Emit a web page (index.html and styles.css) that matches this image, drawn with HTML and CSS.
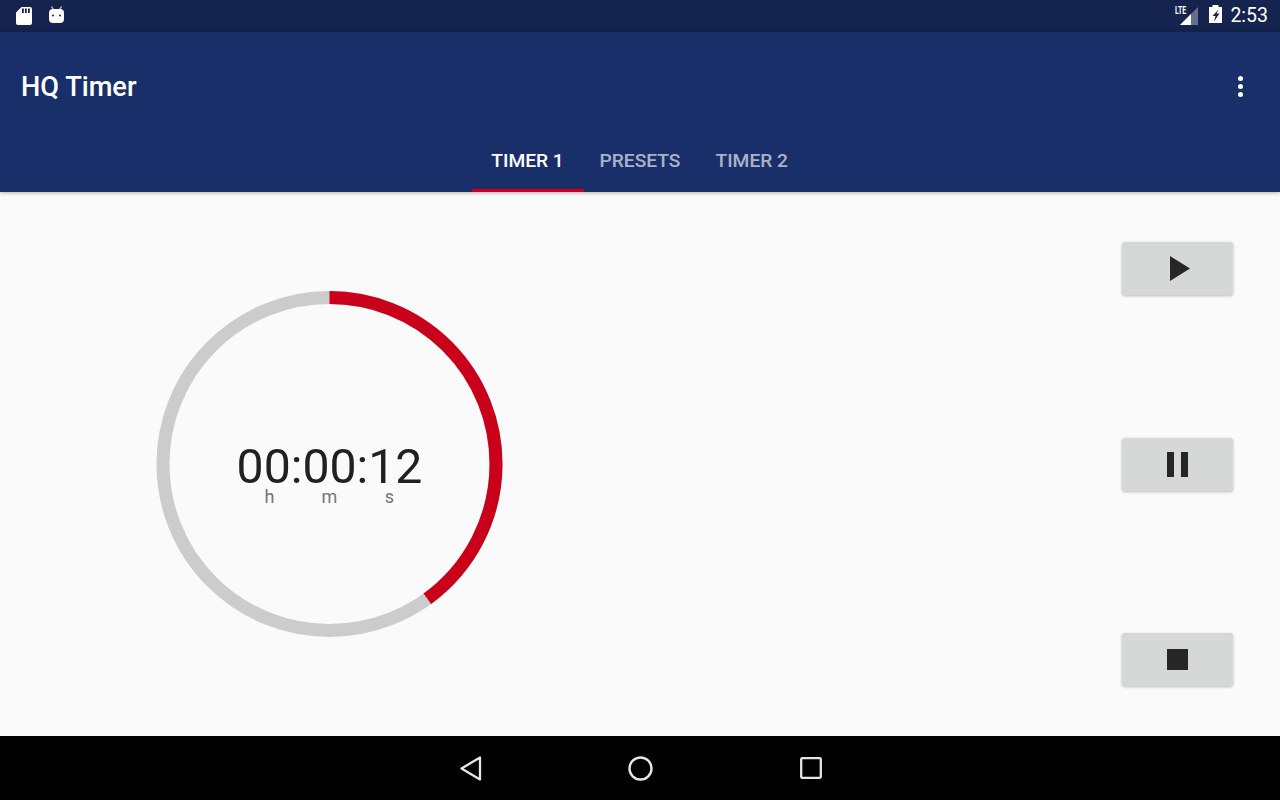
FILE: index.html
```html
<!DOCTYPE html>
<html lang="en">
<head>
<meta charset="utf-8">
<title>HQ Timer</title>
<link rel="stylesheet" href="styles.css">
</head>
<body>
<div class="screen">
  <header class="status-bar">
    <div class="status-left">
      <svg class="icon-sd" viewBox="0 0 16 18"><path fill="#fff" fill-rule="evenodd" d="M5.500 0H14a2 2 0 0 1 2 2V16a2 2 0 0 1-2 2H2a2 2 0 0 1-2-2V5.500ZM6 1.500V6H7.800V1.500ZM9 1.500V6H10.800V1.500ZM12 1.500V6H13.800V1.500Z"/></svg>
      <svg class="icon-android" viewBox="0 0 15 17"><path fill="#fff" fill-opacity=".75" d="M2.800 0l2.200 3.200-1 .6L1.900.7ZM12.200 0l.9.7-2.100 3.100-1-.6Z"/><path fill="#fff" fill-rule="evenodd" d="M4 3H11a4 4 0 0 1 4 4V13a4 4 0 0 1-4 4H4a4 4 0 0 1-4-4V7a4 4 0 0 1 4-4ZM4 8.500a1 1 0 1 0 0 2 1 1 0 0 0 0-2ZM11 8.500a1 1 0 1 0 0 2 1 1 0 0 0 0-2Z"/></svg>
    </div>
    <div class="status-right">
      <div class="signal">
        <span class="lte">LTE</span>
        <svg class="icon-signal" viewBox="0 0 18 18"><path fill="#fff" fill-opacity=".35" d="M18 0V18H0Z"/><path fill="#fff" d="M11 7V18H0Z"/></svg>
      </div>
      <svg class="icon-battery" viewBox="0 0 13 18"><path fill="#fff" fill-rule="evenodd" d="M3.500 0H9.500V2H13V18H0V2H3.500ZM10 4 3.500 11H6.500L5 16.500 10.500 8.500H7.500Z"/></svg>
      <span class="clock">2:53</span>
    </div>
  </header>

  <div class="app-bar">
    <div class="title-row">
      <h1 class="title">HQ Timer</h1>
      <div class="overflow"><i></i><i></i><i></i></div>
    </div>
    <nav class="tabs">
      <div class="tab tab-active">TIMER 1</div>
      <div class="tab tab-presets">PRESETS</div>
      <div class="tab">TIMER 2</div>
    </nav>
  </div>

  <main class="content">
    <section class="dial">
      <svg class="ring" viewBox="0 0 347 347">
        <circle class="ring-track" cx="173.500" cy="173" r="166.500"/>
        <circle class="ring-progress" cx="173.500" cy="173" r="166.500" pathLength="100" stroke-dasharray="40 60" transform="rotate(-90 173.500 173)"/>
      </svg>
      <div class="readout">
        <div class="digits">00:00:12</div>
        <div class="units"><span>h</span><span>m</span><span>s</span></div>
      </div>
    </section>
    <section class="controls">
      <button class="control" type="button" aria-label="Start"><svg viewBox="0 0 20 25" class="glyph-play"><path fill="#262626" d="M0 0 20 12.500 0 25Z"/></svg></button>
      <button class="control" type="button" aria-label="Pause"><svg viewBox="0 0 21 25" class="glyph-pause"><path fill="#262626" d="M0 0H7V25H0ZM14 0H21V25H14Z"/></svg></button>
      <button class="control" type="button" aria-label="Stop"><svg viewBox="0 0 21 21" class="glyph-stop"><path fill="#262626" d="M0 0H21V21H0Z"/></svg></button>
    </section>
  </main>

  <footer class="nav-bar">
    <svg class="nav-back" viewBox="0 0 22 25"><path fill="none" stroke="#e6e6e6" stroke-width="2.300" stroke-linejoin="round" d="M20 1.500V23.500L1.500 12.500Z"/></svg>
    <svg class="nav-home" viewBox="0 0 25 25"><circle fill="none" stroke="#e6e6e6" stroke-width="2.400" cx="12.500" cy="12.500" r="11"/></svg>
    <svg class="nav-recent" viewBox="0 0 22 22"><rect fill="none" stroke="#e6e6e6" stroke-width="2.300" x="1.200" y="1.200" width="19.600" height="19.600" rx="1"/></svg>
  </footer>
</div>
</body>
</html>
```
FILE: styles.css
```css
* { box-sizing: border-box; }
html, body { margin: 0; padding: 0; }
body { width: 1280px; height: 800px; overflow: hidden; font-family: Roboto, "Liberation Sans", sans-serif; background: #fafafa; }
.screen { display: flex; flex-direction: column; width: 1280px; height: 800px; }

.status-bar { flex: 0 0 32px; display: flex; justify-content: space-between; align-items: center; background: #15234f; color: #fff; padding: 0 12px 0 16px; }
.status-left { display: flex; align-items: center; gap: 17px; }
.icon-sd { width: 16px; height: 18px; display: block; }
.icon-android { width: 15px; height: 17px; display: block; margin-top: -3px; }
.status-right { display: flex; align-items: center; }
.signal { position: relative; width: 24px; height: 20px; margin-right: 11px; }
.icon-signal { position: absolute; right: 0; top: 1px; width: 18px; height: 18px; }
.lte { position: absolute; left: 1px; top: -1px; font-size: 11px; font-weight: 700; transform: scaleX(.63); transform-origin: left top; line-height: 12px; }
.icon-battery { width: 13px; height: 18px; display: block; margin-right: 8px; margin-top: -4px; }
.clock { font-size: 19.500px; line-height: 20px; }

.app-bar { flex: 0 0 160px; height: 160px; background: #192f6a; color: #fff; display: flex; flex-direction: column; position: relative; z-index: 1; box-shadow: 0 1px 4px rgba(0,0,0,.3); }
.title-row { flex: 0 0 112px; display: flex; justify-content: space-between; align-items: center; padding: 0 37px 2px 21px; }
.title { margin: 0; font-size: 27.200px; font-weight: 500; line-height: 32px; }
.overflow { display: flex; flex-direction: column; gap: 3px; margin-bottom: 2px; }
.overflow i { display: block; width: 5px; height: 5px; border-radius: 50%; background: #fff; }
.tabs { flex: 1; display: flex; justify-content: center; padding-right: 3px; }
.tab { display: flex; align-items: center; justify-content: center; padding: 0 17.500px 13px; font-size: 19.200px; font-weight: 500; color: rgba(255,255,255,.65); border-bottom: 3px solid transparent; }
.tab-active { width: 112px; padding: 0 0 13px; color: #fff; border-bottom-color: #ca001b; }
.tab-presets { padding-left: 16px; }

.content { flex: 1; display: flex; justify-content: space-between; align-items: stretch; padding: 50px 47px 50px 156px; }
.dial { position: relative; width: 347px; height: 347px; align-self: center; }
.ring { display: block; width: 347px; height: 347px; }
.ring-track, .ring-progress { fill: none; stroke-width: 13; }
.ring-track { stroke: #cccccc; }
.ring-progress { stroke: #ca001b; }
.readout { position: absolute; left: 0; right: 0; top: 156.500px; text-align: center; }
.digits { font-size: 48.200px; line-height: 40px; color: #212121; }
.units { display: flex; justify-content: center; gap: 52px; font-size: 18px; line-height: 20px; color: #757575; }
.units span { width: 8px; display: flex; justify-content: center; }

.controls { display: flex; flex-direction: column; justify-content: space-between; }
.control { width: 111px; height: 53px; padding: 0; border: 0; border-radius: 3px; background: #d6d7d7; box-shadow: 0 1px 3px rgba(0,0,0,.25); display: flex; align-items: center; justify-content: center; }
.glyph-play { width: 20px; height: 25px; display: block; margin-left: 5px; }
.glyph-pause { width: 21px; height: 25px; display: block; }
.glyph-stop { width: 21px; height: 21px; display: block; }

.nav-bar { flex: 0 0 64px; background: #000; display: flex; align-items: center; padding-left: 460px; }
.nav-back { width: 22px; height: 25px; display: block; }
.nav-home { width: 25px; height: 25px; display: block; margin-left: 146px; }
.nav-recent { width: 22px; height: 22px; display: block; margin-left: 147px; }
```
